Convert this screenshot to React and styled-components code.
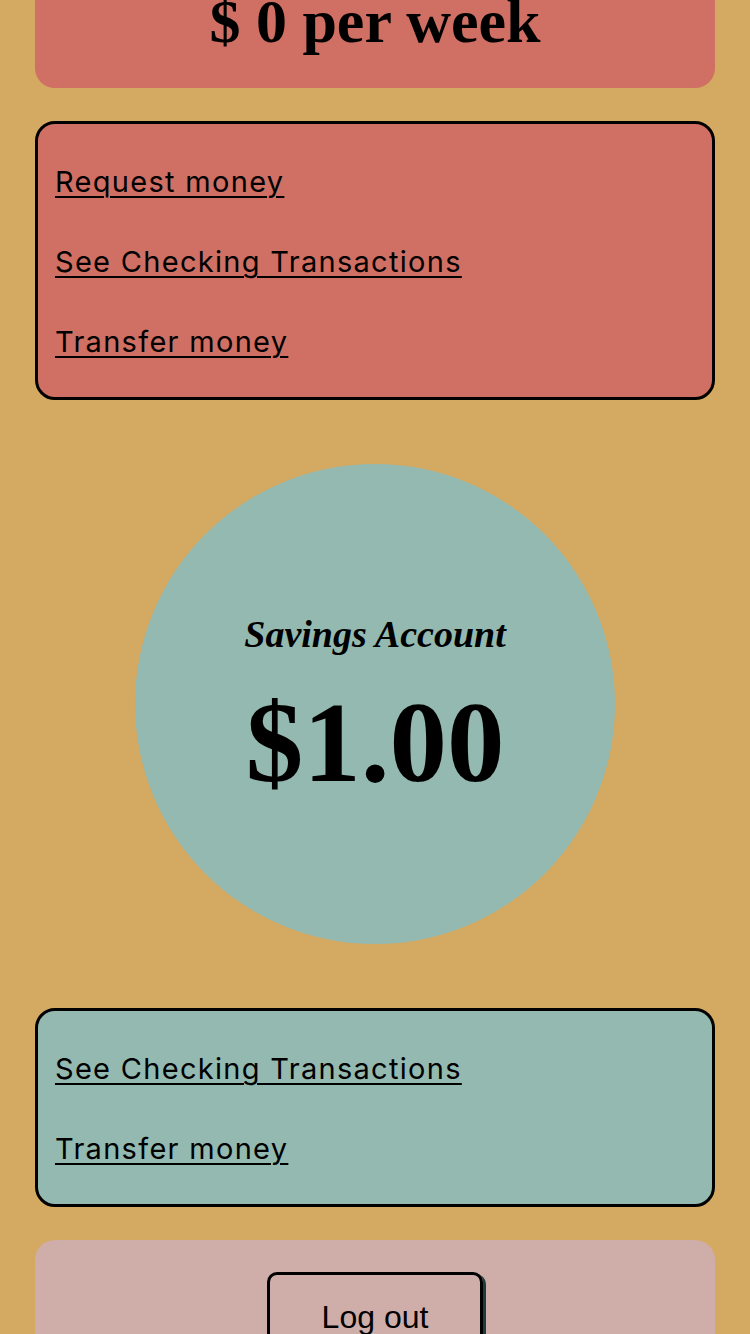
import styled, { createGlobalStyle } from 'styled-components';

const GlobalStyle = createGlobalStyle`
  html, body {
    margin: 0;
    padding: 0;
    background: #d4a962;
  }
  body {
    font-family: Inter, 'Noto Sans', sans-serif;
    color: #000;
    overflow: hidden;
  }
`;

const checkingLinks = ['Request money', 'See Checking Transactions', 'Transfer money'];
const savingsLinks = ['See Checking Transactions', 'Transfer money'];

const App = () => {
  return (
    <Page>
      <GlobalStyle />
      <Banner>
        <Weekly>$ 0 per week</Weekly>
      </Banner>

      <LinkCard $bg='#d06f63'>
        {checkingLinks.map((label) => (
          <LinkItem key={label} href='#'>
            {label}
          </LinkItem>
        ))}
      </LinkCard>

      <Circle>
        <AccountName>Savings Account</AccountName>
        <Balance>$1.00</Balance>
      </Circle>

      <LinkCard $bg='#93b9b1'>
        {savingsLinks.map((label) => (
          <LinkItem key={label} href='#'>
            {label}
          </LinkItem>
        ))}
      </LinkCard>

      <Footer>
        <LogoutButton type='button'>Log out</LogoutButton>
      </Footer>
    </Page>
  );
};

export default App;

const Page = styled.div`
  display: flex;
  flex-direction: column;
  gap: 33px;
  padding: 0 35px 40px;
`;

const Banner = styled.section`
  margin-top: -40px;
  padding: 24px 20px 30px;
  background: #d06f63;
  border-radius: 0 0 20px 20px;
  text-align: center;
`;

const Weekly = styled.h1`
  margin: 0;
  font-family: 'Liberation Serif', serif;
  font-weight: 700;
  font-size: 62px;
  line-height: 1.2;
`;

const LinkCard = styled.nav`
  display: flex;
  flex-direction: column;
  align-items: flex-start;
  gap: 46px;
  padding: 41px 17px 38px;
  background: ${(p) => p.$bg};
  border: 3px solid #000;
  border-radius: 20px;
`;

const LinkItem = styled.a`
  font-family: Inter, 'Noto Sans', sans-serif;
  font-size: 29px;
  line-height: 34px;
  letter-spacing: 1.3px;
  color: #000;
  text-decoration: underline;
  text-underline-offset: 4px;
  text-decoration-thickness: 2px;
`;

const Circle = styled.div`
  box-sizing: border-box;
  width: 480px;
  height: 480px;
  margin: 31px auto;
  padding-top: 10px;
  border-radius: 50%;
  background: #93b9b1;
  display: flex;
  flex-direction: column;
  align-items: center;
  justify-content: center;
`;

const AccountName = styled.h2`
  margin: 0 0 22px;
  font-family: 'Liberation Serif', serif;
  font-style: italic;
  font-weight: 700;
  font-size: 38px;
  line-height: 1.2;
`;

const Balance = styled.p`
  margin: 0;
  font-family: 'Liberation Serif', serif;
  font-weight: 700;
  font-size: 115px;
  line-height: 1.1;
`;

const Footer = styled.section`
  display: flex;
  justify-content: center;
  padding: 32px 20px 40px;
  background: #cfaea9;
  border-radius: 20px;
`;

const LogoutButton = styled.button`
  padding: 24px 52px;
  font-family: 'Liberation Sans', Arial, sans-serif;
  font-size: 32px;
  color: #000;
  background: transparent;
  border: 3px solid #000;
  border-radius: 10px;
  box-shadow: 3px 2px 0 #1d3c40;
  cursor: pointer;
`;
